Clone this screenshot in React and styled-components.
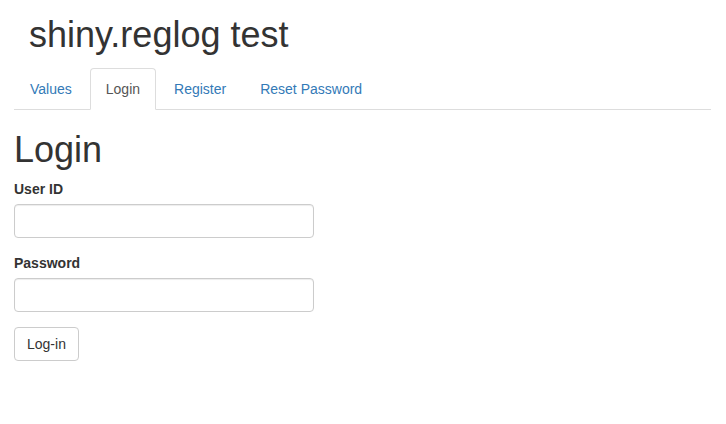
import React from "react";
import styled, { createGlobalStyle } from "styled-components";

const GlobalStyle = createGlobalStyle`
  * { box-sizing: border-box; }
  body {
    margin: 0;
    background: #fff;
    color: #333;
    font-family: "Liberation Sans", Arial, Helvetica, sans-serif;
    font-size: 14px;
    line-height: 1.42857143;
  }
`;

const tabs = ["Values", "Login", "Register", "Reset Password"];

export default function App() {
  return (
    <>
      <GlobalStyle />
      <Page>
        <Title>shiny.reglog test</Title>
        <TabList>
          {tabs.map((t) => (
            <Tab key={t}>
              <TabLink href="#" $active={t === "Login"}>
                {t}
              </TabLink>
            </Tab>
          ))}
        </TabList>
        <TabPane>
          <Heading>Login</Heading>
          <FormGroup>
            <Label htmlFor="uid">User ID</Label>
            <Input id="uid" type="text" />
          </FormGroup>
          <FormGroup>
            <Label htmlFor="pwd">Password</Label>
            <Input id="pwd" type="password" />
          </FormGroup>
          <Button type="button">Log-in</Button>
        </TabPane>
      </Page>
    </>
  );
}

const Page = styled.div`
  padding: 0 15px 0 14px;
`;

const Title = styled.h1`
  margin: 15px 0 13px 15px;
  font-size: 36px;
  font-weight: 500;
  line-height: 40px;
`;

const TabList = styled.ul`
  display: flex;
  margin: 0;
  padding: 0;
  list-style: none;
  border-bottom: 1px solid #ddd;
`;

const Tab = styled.li`
  margin-right: 2px;
  margin-bottom: -1px;
`;

const TabLink = styled.a`
  display: block;
  padding: 10px 15px;
  line-height: 20px;
  text-decoration: none;
  border: 1px solid ${(p) => (p.$active ? "#ddd" : "transparent")};
  border-bottom-color: ${(p) => (p.$active ? "#fff" : "transparent")};
  border-radius: 4px 4px 0 0;
  background: ${(p) => (p.$active ? "#fff" : "transparent")};
  color: ${(p) => (p.$active ? "#555" : "#337ab7")};
`;

const TabPane = styled.div`
  display: flex;
  flex-direction: column;
  align-items: flex-start;
`;

const Heading = styled.h1`
  margin: 20px 0 9px;
  font-size: 36px;
  font-weight: 500;
  line-height: 1.1;
`;

const FormGroup = styled.div`
  display: flex;
  flex-direction: column;
  align-items: flex-start;
  margin-bottom: 15px;
  width: 300px;
`;

const Label = styled.label`
  margin-bottom: 5px;
  font-weight: 700;
`;

const Input = styled.input`
  width: 100%;
  height: 34px;
  padding: 6px 12px;
  font: inherit;
  color: #555;
  background: #fff;
  border: 1px solid #ccc;
  border-radius: 4px;
  box-shadow: inset 0 1px 1px rgba(0, 0, 0, 0.075);
  outline: none;
`;

const Button = styled.button`
  padding: 6px 12px;
  font: inherit;
  line-height: 20px;
  color: #333;
  background: #fff;
  border: 1px solid #ccc;
  border-radius: 4px;
`;
